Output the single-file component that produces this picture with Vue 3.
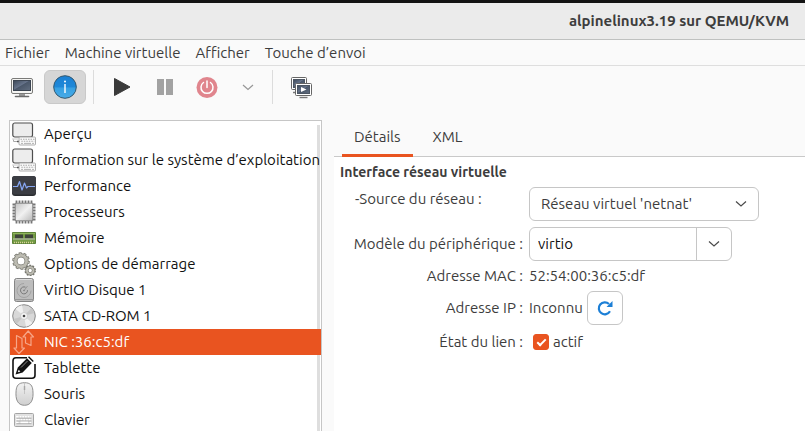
<script setup>
import { ref } from 'vue'

const menus = ['Fichier', 'Machine virtuelle', 'Afficher', 'Touche d’envoi']
const devices = [
  { icon: 'computer', label: 'Aperçu' },
  { icon: 'computer', label: 'Information sur le système d’exploitation' },
  { icon: 'performance', label: 'Performance' },
  { icon: 'cpu', label: 'Processeurs' },
  { icon: 'memory', label: 'Mémoire' },
  { icon: 'gears', label: 'Options de démarrage' },
  { icon: 'disk', label: 'VirtIO Disque 1' },
  { icon: 'cdrom', label: 'SATA CD-ROM 1' },
  { icon: 'network', label: 'NIC :36:c5:df' },
  { icon: 'tablet', label: 'Tablette' },
  { icon: 'mouse', label: 'Souris' },
  { icon: 'keyboard', label: 'Clavier' }
]
const selected = ref(8)
const tab = ref('Détails')
const model = ref('virtio')
const active = ref(true)
</script>

<template>
  <div class="window">
    <header class="titlebar"><h1>alpinelinux3.19 sur QEMU/KVM</h1></header>

    <nav class="menubar">
      <a v-for="m in menus" :key="m" href="#">{{ m }}</a>
    </nav>

    <div class="toolbar">
      <button class="tool" aria-label="Console">
        <svg width="24" height="24" viewBox="0 0 24 24">
          <defs>
            <linearGradient id="scr" x1="0" y1="0" x2="1" y2="1">
              <stop offset="0" stop-color="#3b4757" /><stop offset=".45" stop-color="#66738a" /><stop offset=".5" stop-color="#4a576a" /><stop offset="1" stop-color="#626e80" />
            </linearGradient>
          </defs>
          <rect x="1.5" y="3.5" width="21" height="15" rx="1.5" fill="#f4f4f2" stroke="#7b7b79" />
          <rect x="3.500" y="5.500" width="17" height="10" fill="url(#scr)" stroke="#3c4552" />
          <path d="M9 19h6v2H9z" fill="#999" /><path d="M5.500 21.500h13" stroke="#6a6a6a" stroke-width="1.600" stroke-linecap="round" />
        </svg>
      </button>
      <button class="tool pressed" aria-label="Informations">
        <svg width="24" height="24" viewBox="0 0 24 24">
          <defs>
            <linearGradient id="inf" x1="0" y1="0" x2="0" y2="1">
              <stop offset="0" stop-color="#1b80d3" /><stop offset=".5" stop-color="#1f88d8" /><stop offset=".54" stop-color="#36a0e2" /><stop offset="1" stop-color="#48abe7" />
            </linearGradient>
          </defs>
          <circle cx="12" cy="12" r="11.300" fill="url(#inf)" stroke="#34586f" />
          <path d="M12 9V18" stroke="#fff" stroke-width="1.400" /><circle cx="12" cy="6.500" r="1" fill="#fff" />
        </svg>
      </button>
      <span class="sep"></span>
      <button class="tool" aria-label="Démarrer">
        <svg width="24" height="24" viewBox="0 0 24 24"><path d="M4.500 3.500 20 12 4.500 20.500z" fill="#3a3a3a" stroke="#3a3a3a" stroke-linejoin="round" /></svg>
      </button>
      <button class="tool" aria-label="Pause">
        <svg width="24" height="24" viewBox="0 0 24 24"><path d="M4 4h7v16H4zM13 4h7v16h-7z" fill="#a2a2a2" /></svg>
      </button>
      <button class="tool" aria-label="Éteindre">
        <svg width="24" height="24" viewBox="0 0 24 24">
          <circle cx="11" cy="12.500" r="10.500" fill="#e0858d" />
          <path d="M7.500 7.500a6 6 0 1 0 7 0M11 6v6.500" fill="none" stroke="#fff" stroke-width="1.500" stroke-linecap="round" />
        </svg>
      </button>
      <button class="tool narrow" aria-label="Options d’arrêt">
        <svg width="24" height="24" viewBox="0 0 24 24"><path d="m7 10 5 4.500 5-4.500" fill="none" stroke="#979797" stroke-width="1.200" /></svg>
      </button>
      <span class="sep"></span>
      <button class="tool" aria-label="Instantanés">
        <svg width="24" height="24" viewBox="0 0 24 24">
          <rect x="2.500" y="2.500" width="15" height="12" rx="1" fill="#fff" stroke="#666" />
          <rect x="4.500" y="4.500" width="11" height="8" fill="url(#scr)" stroke="#4c5663" />
          <path d="M4 17.500h4" stroke="#777" stroke-width="1.500" />
          <rect x="6.500" y="8.500" width="16" height="12" rx="1" fill="#fff" stroke="#666" />
          <rect x="8.500" y="10.500" width="12" height="8" fill="url(#scr)" stroke="#4c5663" />
          <path d="m12 12 5.500 2.500L12 17z" fill="#fff" /><path d="M10.500 22.500h8" stroke="#777" stroke-width="1.400" />
        </svg>
      </button>
    </div>

    <main class="content">
      <ul class="devices">
        <li v-for="(d, i) in devices" :key="i">
          <button :class="['device', { selected: i === selected }]" @click="selected = i">
            <svg width="24" height="24" viewBox="0 0 24 24" aria-hidden="true">
              <defs>
                <linearGradient id="metal" x1="0" y1="0" x2="1" y2="1">
                  <stop offset="0" stop-color="#c6c6c6" /><stop offset=".5" stop-color="#f1f1f1" /><stop offset="1" stop-color="#bcbcbc" />
                </linearGradient>
                <linearGradient id="shell" x1="0" y1="0" x2="0" y2="1">
                  <stop offset="0" stop-color="#f2f2f2" /><stop offset="1" stop-color="#cfcfcf" />
                </linearGradient>
              </defs>
              <g v-if="d.icon === 'computer'">
                <rect x=".8" y="1" width="19.700" height="14" rx="2" fill="#ededed" stroke="#4e4e4e" stroke-width="1.200" />
                <path d="M1.500 17.500v2H6" fill="none" stroke="#aaa" />
                <path d="M0 17h6" stroke="#ccc" /><path d="M5 19.500h2" stroke="#555" stroke-width="1.500" />
                <rect x="7" y="15" width="16.500" height="8" rx="1" fill="#fafafa" stroke="#999" stroke-width=".8" />
                <path d="M8.500 17.200h14M9.300 19.300h13" stroke="#aaa" stroke-width="1.100" stroke-dasharray="1.500 1" />
                <path d="M9 21.400h2M12 21.400h7M20 21.400h2" stroke="#aaa" stroke-width=".9" />
              </g>
              <g v-else-if="d.icon === 'performance'">
                <rect y="2" width="24" height="20" rx="3" fill="#2b2d31" />
                <rect y="2" width="24" height="18.500" rx="3" fill="#3b3d43" />
                <path d="M1 12.500h4.500l2-5 2.500 8.500 2.500-7 2 5 1.500-1.500H23" fill="none" stroke="#86a6f2" stroke-width="1.200" stroke-linejoin="round" />
              </g>
              <g v-else-if="d.icon === 'cpu'">
                <path d="M4.500.5v23M7.500.5v23M10.500.5v23M13.500.5v23M16.500.5v23M19.500.5v23M.5 4.500h23M.5 7.500h23M.5 10.500h23M.5 13.500h23M.5 16.500h23M.5 19.500h23" stroke="#757575" stroke-width="1.800" />
                <rect x="2.800" y="2.800" width="18.400" height="18.400" rx="1" fill="#8a8a8a" />
                <rect x="3.800" y="3.800" width="16.400" height="16.400" rx="1" fill="url(#metal)" />
              </g>
              <g v-else-if="d.icon === 'memory'">
                <path d="M.5 6.500h23v11H.5z" fill="#749b45" stroke="#5d8238" />
                <path d="M1 7.500h22" stroke="#8fb55c" />
                <path d="M3 8.500h8v4H3zM13 8.500h8v4h-8z" fill="#3f443c" /><path d="M1 13h22" stroke="#a9b39a" stroke-width="1.400" />
                <path d="M2 16.500h20" stroke="#d8d197" stroke-width="1.600" stroke-dasharray="1 1" />
              </g>
              <g v-else-if="d.icon === 'gears'" fill="none">
                <circle cx="9" cy="9" r="7.500" stroke="#77776f" stroke-width="2.600" stroke-dasharray="2.700 2.012" />
                <circle cx="9" cy="9" r="5.600" stroke="#77776f" stroke-width="4.200" />
                <circle cx="9" cy="9" r="7.300" stroke="#b9b8ae" stroke-width="1.600" stroke-dasharray="1.500 3.087" stroke-dashoffset="-.6" />
                <circle cx="9" cy="9" r="5.600" stroke="#bdbcb2" stroke-width="2.700" />
                <circle cx="18.200" cy="18.500" r="4.900" stroke="#77776f" stroke-width="1.800" stroke-dasharray="1.800 1.279" />
                <circle cx="18.200" cy="18.500" r="3.300" fill="#fff" stroke="#77776f" stroke-width="3.200" />
                <circle cx="18.200" cy="18.500" r="3.300" stroke="#bdbcb2" stroke-width="1.900" />
              </g>
              <g v-else-if="d.icon === 'disk'">
                <rect x="2.500" y=".5" width="19" height="23" rx="2" fill="#bdbdbd" stroke="#858585" />
                <path d="M3 21.500h18" stroke="#999" /><path d="M4 1.500h16" stroke="#ddd" />
                <path d="M12 5.500a7 7 0 1 0 7 7" fill="none" stroke="#a2a2a2" /><path d="M13.500 9.200a3.500 3.500 0 1 0 2 3" fill="none" stroke="#777" />
                <path d="m12.500 12 3-4" stroke="#999" /><circle cx="12" cy="12.500" r=".8" fill="#777" />
              </g>
              <g v-else-if="d.icon === 'cdrom'">
                <circle cx="12" cy="12" r="11.300" fill="#d8d8d8" stroke="#8a8a8a" />
                <path d="M12 12 3.500 5A11 11 0 0 1 10 1.300zM12 12l8.500 7a11 11 0 0 1-6.500 3.700z" fill="#f0f0f0" />
                <path d="M12 12 1.500 15a11 11 0 0 0 3 5zM12 12l10.500-3a11 11 0 0 0-3-5z" fill="#c6c6c6" />
                <circle cx="12" cy="12" r="3.500" fill="#f6f6f6" stroke="#ccc" /><circle cx="12" cy="12" r="1.300" fill="#444" />
              </g>
              <g v-else-if="d.icon === 'network'" fill="none" stroke="#f7a688" stroke-width="1.200" stroke-linejoin="round">
                <path d="M13.500 13V7H11l5.200-6L21.500 7H19v8.500z" />
                <path d="M4.500 5.500 10 8.500V18h2.500L7 23.500 2 18h2.500z" />
              </g>
              <g v-else-if="d.icon === 'tablet'">
                <path d="M15 1.800H4a3 3 0 0 0-3 3v14.400a3 3 0 0 0 3 3h16a3 3 0 0 0 3-3V8" fill="none" stroke="#111" stroke-width="1.600" />
                <path d="m3.500 18.500 2.300-7L15 2.300l4.800 4.800-9.200 9.300zM16 1.300l1-1 4.800 4.800-1 1z" fill="#111" />
                <path d="m9 11.500 6.500-6.500" stroke="#bbb" stroke-width=".7" /><path d="m5.800 16.300.9-2.600 1.700 1.700z" fill="#fff" />
              </g>
              <g v-else-if="d.icon === 'mouse'">
                <path d="M12.500.7c6 0 8 3 8.400 8 .8 8.500-1.400 14.600-8.400 14.600S3.300 17.200 4.100 8.700c.4-5 2.400-8 8.400-8z" fill="url(#shell)" stroke="#8f8f8f" />
                <path d="M12.500 1v11" fill="none" stroke="#c4c4c4" /><path d="M12.500 4v4" stroke="#a5a5a5" stroke-width="1.400" />
              </g>
              <g v-else>
                <rect x="2.500" y="5.500" width="19" height="13" rx="1" fill="#e2e2e2" stroke="#a5a5a5" />
                <path d="M5 8.800h14M6 11.500h13M5 14.500h2M17.500 14.500h1.500M5 8v7" stroke="#fff" stroke-width="1.800" stroke-dasharray="1.600 1.100" />
                <path d="M4.500 10.200h15M4.500 13h15M4.500 15.700h15" stroke="#999" stroke-width=".8" /><path d="M8.500 14.400h7.500" stroke="#fff" stroke-width="1.500" />
              </g>
            </svg>
            <span>{{ d.label }}</span>
          </button>
        </li>
      </ul>

      <section class="panel">
        <div class="tabs" role="tablist">
          <button v-for="t in ['Détails', 'XML']" :key="t" role="tab" :class="['tab', { current: t === tab }]" @click="tab = t">{{ t }}</button>
        </div>
        <form class="details" @submit.prevent>
          <h2>Interface réseau virtuelle</h2>
          <div class="fields">
            <label class="source-label" for="source">-Source du réseau :</label>
            <div class="select-box">
              <select id="source"><option>Réseau virtuel 'netnat'</option></select>
              <svg class="chevron" width="12" height="8" viewBox="0 0 12 8"><path d="m1 1.500 5 4.500 5-4.500" fill="none" stroke="#4a4a4a" stroke-width="1.200" /></svg>
            </div>
            <label for="model">Modèle du périphérique :</label>
            <div class="combo">
              <input id="model" v-model="model" type="text" />
              <button aria-label="Choisir un modèle">
                <svg width="12" height="8" viewBox="0 0 12 8"><path d="m1 1.500 5 4.500 5-4.500" fill="none" stroke="#4a4a4a" stroke-width="1.200" /></svg>
              </button>
            </div>
            <span>Adresse MAC :</span>
            <span class="value">52:54:00:36:c5:df</span>
            <span>Adresse IP :</span>
            <div class="value ip">
              Inconnu
              <button class="refresh" aria-label="Actualiser">
                <svg width="16" height="16" viewBox="0 0 16 16"><path d="M13 11.300A6 6 0 1 1 12 4" fill="none" stroke="#1c7fd6" stroke-width="2.200" /><path d="M15.500 1v6H9.500z" fill="#1c7fd6" /></svg>
              </button>
            </div>
            <span>État du lien :</span>
            <label class="value check"><input v-model="active" type="checkbox" />actif</label>
          </div>
        </form>
      </section>
    </main>
  </div>
</template>

<style>
body { background: #fafafa; }
</style>

<style scoped>
.window {
  display: flex;
  flex-direction: column;
  height: 100vh;
  overflow: hidden;
  background: #fafafa;
  color: #3d3d3d;
  font: 15px/18px Ubuntu, "Noto Sans", sans-serif;
}
*, *::before { box-sizing: border-box; }
button, input, select { font: inherit; color: inherit; margin: 0; padding: 0; border: 0; background: none; }
svg { display: block; flex: none; }
.titlebar {
  display: flex;
  flex: none;
  align-items: center;
  justify-content: flex-end;
  height: 40px;
  padding-right: 16px;
  background: #ebebeb;
  border-top: 3px solid #131313;
  border-bottom: 1px solid #bfc1c0;
}
h1, h2 { margin: 0; line-height: 18px; font-weight: 700; }
h1 { font-size: 15px; }
h2 { font-size: 14px; }
.menubar { display: flex; flex: none; align-items: center; gap: 15px; height: 26px; padding: 0 5px; border-bottom: 1px solid #dedede; }
.menubar a { color: inherit; text-decoration: none; white-space: nowrap; }
.toolbar { display: flex; flex: none; height: 54px; padding: 4px 1px; gap: 1px; }
.tool { display: grid; place-items: center; width: 42px; height: 34px; border-radius: 6px; }
.tool.narrow { width: 35px; }
.tool.pressed { background: #d6d6d6; border: 1px solid #c9c9c9; }
.sep { width: 1px; height: 34px; margin: 0 6px; background: #dcdcdc; }
.content { display: flex; flex: 1; gap: 12px; min-height: 0; padding-left: 9px; }
.devices {
  flex: none;
  width: 313px;
  margin: 0;
  padding: 0;
  overflow: hidden;
  list-style: none;
  background: linear-gradient(#dedede, #dedede) right 1px top 4px / 3px 100% no-repeat #fff;
  border: 1px solid #c6c6c6;
  border-bottom: 0;
}
.device { display: flex; align-items: center; gap: 8px; width: 100%; height: 26px; padding: 0 2px; color: #111; text-align: left; white-space: nowrap; }
.device.selected { background: #e95420; color: #fff; }
.panel { display: flex; flex: 1; flex-direction: column; min-width: 0; }
.tabs { display: flex; gap: 8px; height: 37px; padding-left: 8px; border-bottom: 1px solid #c9c9c9; }
.tab { height: 37px; padding: 0 12px; border-bottom: 3px solid transparent; }
.tab.current { border-bottom-color: #e95420; }
.details { flex: 1; padding: 6px; background: #fff; }
.fields { display: grid; grid-template-columns: 168px 1fr; gap: 6px; align-items: center; padding: 6px 0 0 15px; white-space: nowrap; }
.fields > * { justify-self: end; }
.fields > .source-label { align-self: start; justify-self: start; padding-top: 3px; }
.fields > div, .fields > .value { justify-self: start; }
.select-box { display: grid; align-items: center; width: 230px; }
.select-box > * { grid-area: 1 / 1; }
.select-box select { appearance: none; width: 100%; height: 34px; padding: 0 11px; border: 1px solid #c6c6c6; border-radius: 6px; }
.chevron { justify-self: end; margin-right: 12px; pointer-events: none; }
.combo { display: flex; width: 203px; height: 34px; border: 1px solid #c6c6c6; border-radius: 6px; }
.combo input { flex: 1; min-width: 0; padding: 0 8px; color: #111; outline: 0; }
.combo button { display: grid; place-items: center; width: 35px; border-left: 1px solid #c6c6c6; }
.ip { display: flex; align-items: center; gap: 4px; }
.refresh { display: grid; place-items: center; width: 36px; height: 34px; border: 1px solid #c6c6c6; border-radius: 6px; }
.check { display: flex; align-items: center; gap: 4px; height: 22px; padding-left: 4px; }
.check input { display: grid; place-items: center; width: 16px; height: 16px; appearance: none; border: 1px solid #c6c6c6; border-radius: 3px; }
.check input:checked { background: #e95420; border-color: #e95420; }
.check input:checked::before { content: ""; width: 9px; height: 5px; margin-bottom: 2px; border: solid #fff; border-width: 0 0 2px 2px; transform: rotate(-45deg); }
</style>
